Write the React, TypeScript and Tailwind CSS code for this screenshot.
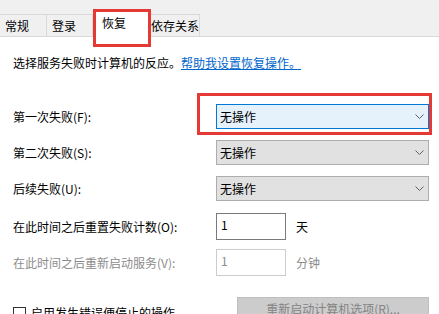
import React from "react";

function Chevron() {
  return (
    <svg width="9" height="5" viewBox="0 0 9 5" className="shrink-0">
      <path d="M0.5 0.5 L4.5 4.5 L8.5 0.5" fill="none" stroke="#606060" strokeWidth="1" />
    </svg>
  );
}

function Select({ active }: { active?: boolean }) {
  return (
    <div
      className={
        active
          ? "w-[213px] h-[25px] border border-[#0078d7] bg-[#e5f1fb] flex items-center justify-between pl-[3px] pr-[4px]"
          : "w-[213px] h-[25px] border border-[#adadad] bg-[#e1e1e1] flex items-center justify-between pl-[3px] pr-[4px]"
      }
    >
      <span>无操作</span>
      <Chevron />
    </div>
  );
}

export default function App() {
  return (
    <div className="w-[439px] h-[314px] overflow-hidden bg-white relative text-[12px] leading-[16px] text-black font-['Noto_Sans_CJK_SC','Microsoft_YaHei',sans-serif]">
      {/* tab strip */}
      <div className="h-[37px] bg-[#f0f0f0] border-b border-[#d9d9d9] flex items-end">
        <div className="w-[47px] h-[23px] border-t border-r border-b border-[#d9d9d9] pl-[5px] flex items-center -mb-px">
          常规
        </div>
        <div className="w-[46px] h-[23px] border-t border-r border-b border-[#d9d9d9] pl-[5px] flex items-center -mb-px">
          登录
        </div>
        <div className="w-[57px] h-[27px] bg-white border-t border-x border-[#d9d9d9] pl-[8px] pt-[4px] -mb-px">
          恢复
        </div>
        <div className="w-[50px] h-[23px] border-t border-r border-b border-[#d9d9d9] pl-[1px] flex items-center -mb-px">
          依存关系
        </div>
      </div>

      <div className="pl-[13px] pt-[18px]">
        <p>
          选择服务失败时计算机的反应。
          <a className="text-[#0066cc] underline">帮助我设置恢复操作。</a>
        </p>

        <div className="mt-[33px] flex flex-col gap-[11px]">
          <div className="flex items-center">
            <span className="w-[203px]">第一次失败(F):</span>
            <Select active />
          </div>
          <div className="flex items-center">
            <span className="w-[203px]">第二次失败(S):</span>
            <Select />
          </div>
          <div className="flex items-center">
            <span className="w-[203px]">后续失败(U):</span>
            <Select />
          </div>
        </div>

        <div className="mt-[12px] flex items-center">
          <span className="w-[203px]">在此时间之后重置失败计数(O):</span>
          <div className="w-[70px] h-[27px] border border-[#7a7a7a] pl-[4px] pt-[3px]">1</div>
          <span className="ml-[10px]">天</span>
        </div>
        <div className="mt-[9px] flex items-center text-[#8c8c8c]">
          <span className="w-[203px]">在此时间之后重新启动服务(V):</span>
          <div className="w-[70px] h-[27px] border border-[#cccccc] pl-[4px] pt-[3px]">1</div>
          <span className="ml-[10px]">分钟</span>
        </div>

        <div className="mt-[21px] flex items-start">
          <div className="w-[210px] flex items-center gap-[5px] pt-[8px]">
            <span className="w-[13px] h-[13px] border border-[#333333] shrink-0" />
            <span>启用发生错误便停止的操作。</span>
          </div>
          <div className="ml-[14px] w-[192px] h-[24px] bg-[#cccccc] border border-[#bfbfbf] text-[#838383] flex items-center justify-center">
            重新启动计算机选项(R)...
          </div>
        </div>
      </div>

      {/* annotation boxes */}
      <div className="absolute left-[93px] top-[9px] w-[58px] h-[38px] border-[3px] border-[#e53935]" />
      <div className="absolute left-[197px] top-[93px] w-[235px] h-[42px] border-[3px] border-[#e53935]" />
    </div>
  );
}
